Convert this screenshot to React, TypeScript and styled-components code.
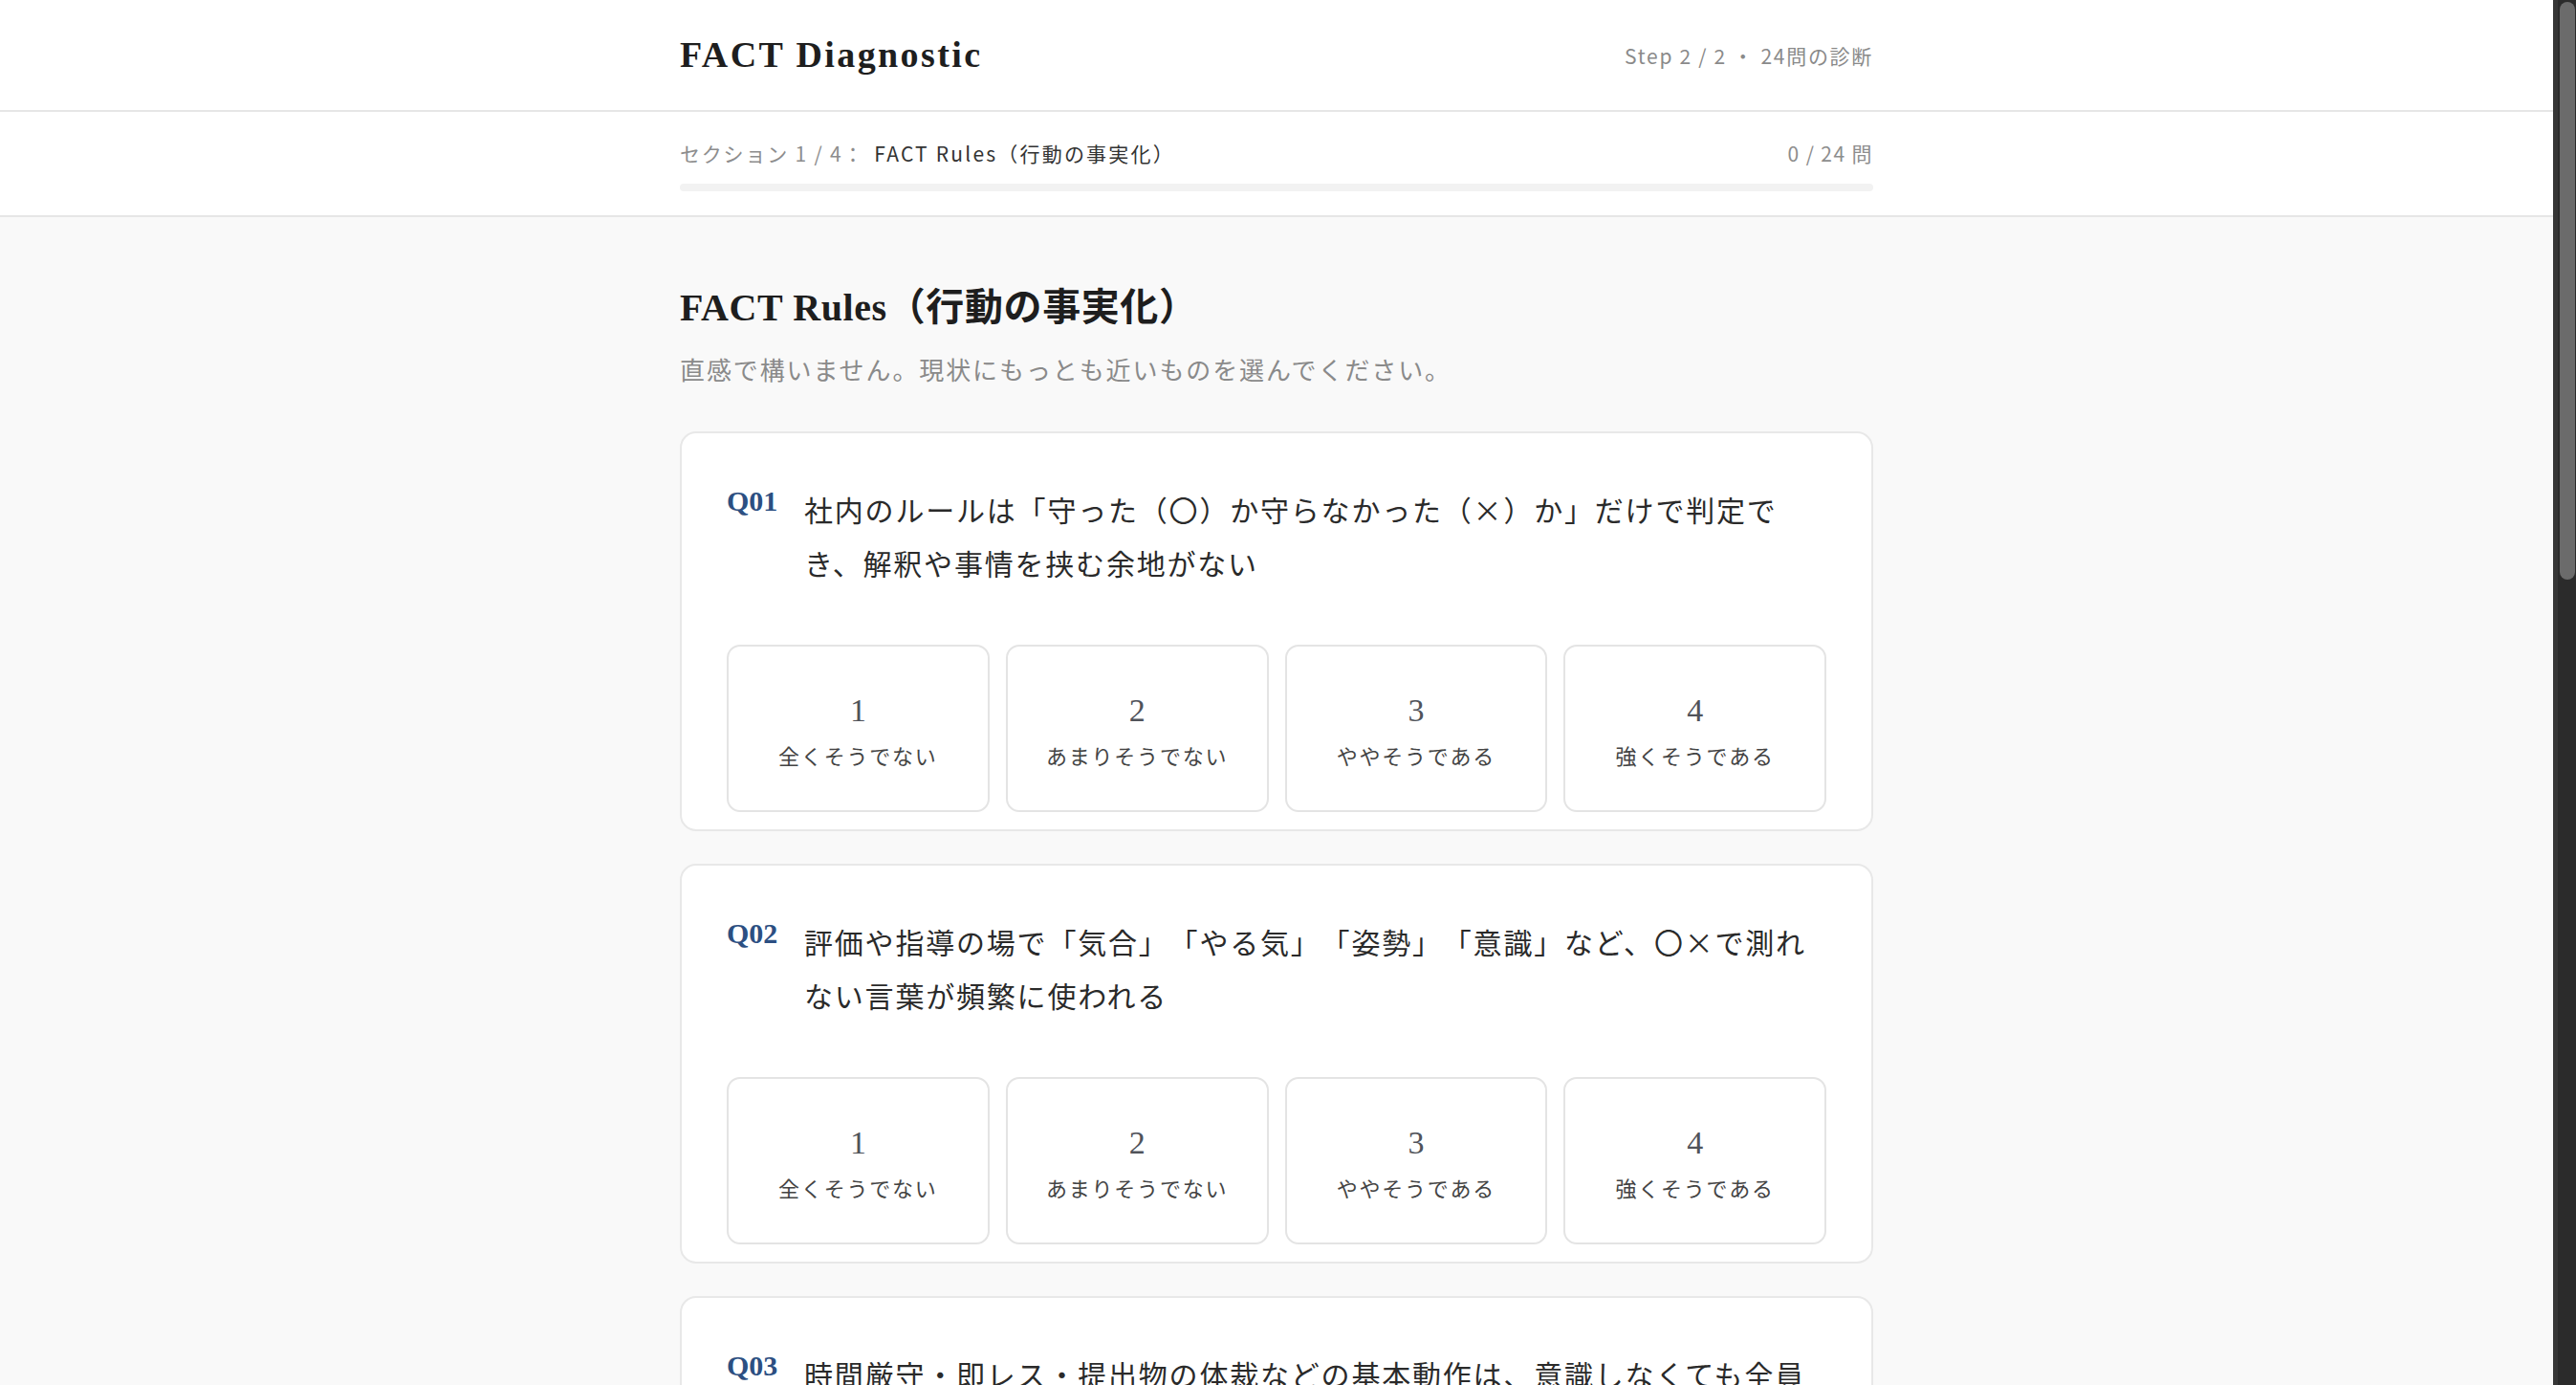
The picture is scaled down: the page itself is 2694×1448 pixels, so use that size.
import * as React from "react";
import styled, {createGlobalStyle} from "styled-components";

const GlobalStyle = createGlobalStyle`
  html, body {
    margin: 0;
    padding: 0;
    background: #f9f9f9;
  }
  body {
    font-family: "Noto Sans CJK JP", "Noto Sans", sans-serif;
    color: #333;
    text-spacing-trim: space-all;
  }
`;

const SERIF = `"Liberation Serif", "Noto Serif", "Noto Sans CJK JP", serif`;

const Page = styled.div`
  display: flex;
  align-items: flex-start;
`;

const Content = styled.div`
  flex: 1;
  min-width: 0;
`;

// scroll rail drawn on the right, like the browser's dark scrollbar
const Rail = styled.div`
  position: sticky;
  top: 0;
  flex: 0 0 24px;
  height: 100vh;
  background: #2b2b2b;
  border-left: 5px solid #363636;
  box-sizing: border-box;
  padding: 2px 1px 0 2px;
`;

const Thumb = styled.div`
  height: 604px;
  border-radius: 8px;
  background: #6b6b6b;
`;

const Container = styled.div`
  width: 1248px;
  margin: 0 auto;
  box-sizing: border-box;
`;

const Header = styled.header`
  background: #fff;
  border-bottom: 2px solid #e6e6e6;
  height: 117px;
  box-sizing: border-box;
`;

const HeaderRow = styled(Container)`
  height: 100%;
  display: flex;
  align-items: center;
  justify-content: space-between;
`;

const Brand = styled.div`
  font-family: ${SERIF};
  font-weight: 700;
  font-size: 38px;
  color: #1e1e1e;
  letter-spacing: 2.4px;
  padding-bottom: 2px;
`;

const StepText = styled.div`
  font-size: 21px;
  color: #8a8a8a;
  letter-spacing: 1.7px;
`;

const SectionBar = styled.div`
  background: #fff;
  border-bottom: 2px solid #e6e6e6;
  height: 110px;
  box-sizing: border-box;
`;

const SectionInner = styled(Container)`
  padding-top: 27px;
  display: flex;
  flex-direction: column;
  gap: 16px;
`;

const SectionRow = styled.div`
  display: flex;
  justify-content: space-between;
  align-items: center;
  font-size: 21px;
  line-height: 32px;
`;

const SectionLabel = styled.span`
  color: #8d8d8d;
  letter-spacing: 1.8px;
`;

const SectionName = styled.span`
  color: #333;
  margin-left: 10px;
  letter-spacing: 2.2px;
`;

const Count = styled.span`
  color: #8d8d8d;
  letter-spacing: 1.4px;
`;

const Track = styled.div`
  height: 8px;
  border-radius: 4px;
  background: #f2f2f2;
  overflow: hidden;
`;

const Fill = styled.div`
  height: 100%;
  background: #2c4f82;
`;

const Main = styled(Container)`
  padding: 67px 0 200px;
`;

const Title = styled.h1`
  margin: 0;
  font-family: ${SERIF};
  font-weight: 700;
  font-size: 40px;
  line-height: 56px;
  letter-spacing: 0.6px;
  color: #1e1e1e;
`;

const Lead = styled.p`
  margin: 15px 0 44px;
  font-size: 26px;
  line-height: 42px;
  letter-spacing: 1.9px;
  color: #8a8a8a;
`;

const CardList = styled.div`
  display: flex;
  flex-direction: column;
  gap: 34px;
`;

const Card = styled.section`
  background: #fff;
  border: 2px solid #e8e8e8;
  border-radius: 17px;
  padding: 51px 47px 20px;
  height: 418px;
  box-sizing: border-box;
`;

const QuestionRow = styled.div`
  display: flex;
  align-items: flex-start;
  height: 112px;
  margin-bottom: 58px;
`;

const QNo = styled.span`
  flex: 0 0 81px;
  font-family: ${SERIF};
  font-weight: 700;
  font-size: 30px;
  line-height: 40px;
  color: #2c4f82;
`;

const QText = styled.p`
  margin: 0;
  flex: 1;
  font-size: 30px;
  line-height: 56px;
  letter-spacing: 1.8px;
  color: #2a2a2a;
`;

const Options = styled.div`
  display: grid;
  grid-template-columns: repeat(4, 1fr);
  gap: 17px;
`;

const Option = styled.button`
  height: 175px;
  background: #fff;
  border: 2px solid #e4e4e4;
  border-radius: 14px;
  display: flex;
  flex-direction: column;
  align-items: center;
  justify-content: center;
  gap: 10px;
  padding: 4px 0 0;
  cursor: pointer;
  font-family: inherit;
`;

const OptNum = styled.span`
  font-family: ${SERIF};
  font-size: 34px;
  line-height: 40px;
  color: #50535a;
`;

const OptLabel = styled.span`
  font-size: 22px;
  line-height: 32px;
  letter-spacing: 1.8px;
  color: #444;
`;

const Nav = styled.div`
  margin-top: 56px;
  display: flex;
  justify-content: space-between;
`;

const NavButton = styled.button<{ $primary?: boolean }>`
  height: 80px;
  padding: 0 48px;
  border-radius: 14px;
  font-family: inherit;
  font-size: 24px;
  letter-spacing: 1.5px;
  border: 2px solid ${p => p.$primary ? "#2c4f82" : "#e4e4e4"};
  background: ${p => p.$primary ? "#2c4f82" : "#fff"};
  color: ${p => p.$primary ? "#fff" : "#666"};
  opacity: ${p => p.$primary ? 0.4 : 1};
`;

const scale = ["全くそうでない", "あまりそうでない", "ややそうである", "強くそうである"];

const questions = [
    "社内のルールは「守った（〇）か守らなかった（×）か」だけで判定でき、解釈や事情を挟む余地がない",
    "評価や指導の場で「気合」「やる気」「姿勢」「意識」など、〇×で測れない言葉が頻繁に使われる",
    "時間厳守・即レス・提出物の体裁などの基本動作は、意識しなくても全員が当たり前にできている",
    "ルールを破った場合、誰が破っても同じ基準で即座に指摘され、例外がつくられない",
    "上司によって指示や判断の基準が異なり、部下が顔色をうかがって行動することがある",
    "ルールは明文化されており、新しく入った社員でも読めば同じように行動できる",
];

const answered = 0;

export default function App() {
    return <Page>
        <GlobalStyle/>
        <Content>
            <Header>
                <HeaderRow>
                    <Brand>FACT Diagnostic</Brand>
                    <StepText>Step 2 / 2 ・ 24問の診断</StepText>
                </HeaderRow>
            </Header>
            <SectionBar>
                <SectionInner>
                    <SectionRow>
                        <div>
                            <SectionLabel>セクション 1 / 4：</SectionLabel>
                            <SectionName>FACT Rules（行動の事実化）</SectionName>
                        </div>
                        <Count>{answered} / 24 問</Count>
                    </SectionRow>
                    <Track><Fill style={{width: `${answered / 24 * 100}%`}}/></Track>
                </SectionInner>
            </SectionBar>
            <Main>
                <Title>FACT Rules（行動の事実化）</Title>
                <Lead>直感で構いません。現状にもっとも近いものを選んでください。</Lead>
                <CardList>
                    {questions.map((q, i) => <Card key={i}>
                        <QuestionRow>
                            <QNo>Q{String(i + 1).padStart(2, "0")}</QNo>
                            <QText>{q}</QText>
                        </QuestionRow>
                        <Options>
                            {scale.map((label, k) => <Option key={k} type="button">
                                <OptNum>{k + 1}</OptNum>
                                <OptLabel>{label}</OptLabel>
                            </Option>)}
                        </Options>
                    </Card>)}
                </CardList>
                <Nav>
                    <NavButton type="button">前へ</NavButton>
                    <NavButton type="button" $primary>次のセクションへ</NavButton>
                </Nav>
            </Main>
        </Content>
        <Rail><Thumb/></Rail>
    </Page>;
}
